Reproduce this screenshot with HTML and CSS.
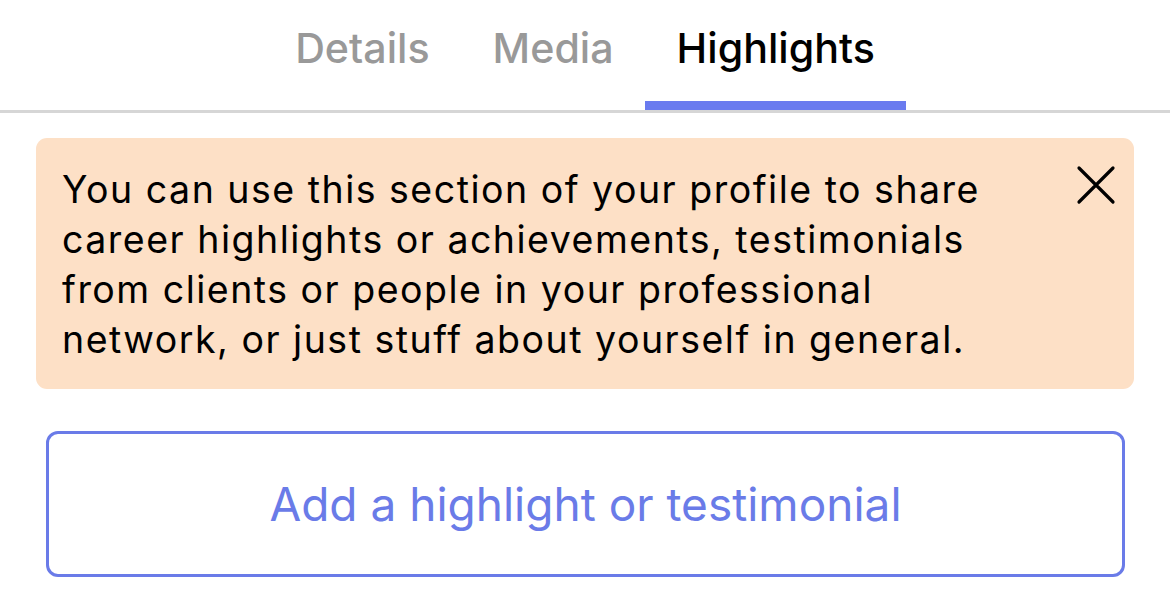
FILE: index.html
```html
<!DOCTYPE html>
<html lang="en">
<head>
<meta charset="utf-8">
<link rel="stylesheet" href="styles.css">
</head>
<body>
<nav class="tabs">
  <div class="tab">Details</div>
  <div class="tab">Media</div>
  <div class="tab active">Highlights</div>
</nav>
<div class="notice">
  <p class="notice-text">You can use this section of your profile to share career highlights or achievements, testimonials from clients or people in your professional network, or just stuff about yourself in general.</p>
  <button class="close" aria-label="Close">
    <svg viewBox="0 0 40 40" width="40" height="40"><path d="M3 3 L37 37 M37 3 L3 37" stroke="#000" stroke-width="3.2" stroke-linecap="round" fill="none"/></svg>
  </button>
</div>
<button class="add">Add a highlight or testimonial</button>
</body>
</html>
```
FILE: styles.css
```css
* { box-sizing: border-box; }
html, body { margin: 0; padding: 0; background: #fff; }
body {
  font-family: Inter, "Noto Sans", sans-serif;
  color: #000;
  width: 1170px;
  height: 605px;
  overflow: hidden;
}
.tabs {
  display: flex;
  justify-content: center;
  border-bottom: 3px solid #d6d6d6;
  height: 113px;
}
.tab {
  padding: 20px 31.5px 0;
  font-size: 41.2px;
  line-height: 56px;
  color: #999;
  font-weight: 500;
  border-bottom: 9px solid transparent;
  height: 110px;
}
.tab.active {
  color: #000;
  border-bottom-color: #6a7bef;
}
.notice {
  margin: 25px 36px 0;
  height: 251px;
  background: #fde0c6;
  border-radius: 11px;
  display: flex;
  align-items: flex-start;
  padding: 27px 18px 0 26px;
}
.notice-text {
  margin: 0;
  font-size: 37.5px;
  line-height: 50px;
  letter-spacing: 1.5px;
  width: 960px;
  color: #000;
}
.close {
  margin-left: auto;
  background: none;
  border: none;
  padding: 0;
  width: 40px;
  height: 40px;
}
.close svg { display: block; }
.add {
  display: block;
  margin: 42px 45px 0 46px;
  width: 1079px;
  height: 146px;
  border: 3px solid #6a7be8;
  border-radius: 12px;
  background: #fff;
  color: #6a7be8;
  font-family: Inter, "Noto Sans", sans-serif;
  font-size: 46px;
}
```
